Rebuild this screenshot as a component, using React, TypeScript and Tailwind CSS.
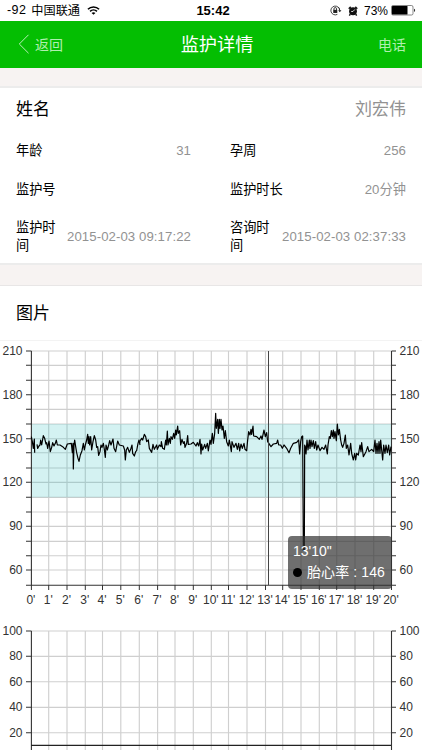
import React from 'react';

type Trace = {
  x: number;
  points: string;
};

const GRID_X = [48.7, 67, 85.3, 102.5, 120.8, 139.3, 157.6, 175, 193.3, 211.3, 228.5, 247, 265.5, 282.7, 301, 319.3, 336.7, 355, 373.7];
const FHR_Y = [10, 24.3, 39.3, 53.7, 68.3, 83, 97.7, 111.7, 127, 141.3, 156.3, 171, 185.3, 200.3, 214.7, 229];
const TOCO_Y = [11, 36.3, 61.7, 87.3, 112.7];

// heart rate, three stretches of the recording (units are thirds of a pixel)
const TRACES: Trace[] = [
  {
    x: 0,
    points:
      'M94 140L97 155L100 175L103 147L104 188M111 163L113 175L117 168L120 165L122 150L125 165L130 137L134 145L138 162L140 158L143 175L147 153L151 185L155 172L158 158L162 168L166 160L169 150L172 165L180 165L188 170L196 178L202 162L214 160L217 188L219 160L220 237L222 165L224 150L227 170L230 188L234 205L237 214L241 195L246 182L250 160L253 180L256 165L260 150L263 133L265 160L267 140L269 165L272 140L275 180L279 155L283 137L287 150L290 172L293 170L296 196L300 185L303 165L306 172L310 160L313 178L316 202L318 165L322 180L326 165L329 152L333 165L339 147L342 175L347 185L353 153L358 165L370 168L374 180L376 210L379 180L383 172L388 187L392 178L396 165L398 190L403 198L407 185L410 182L414 160L417 150L420 165',
  },
  {
    x: 130,
    points:
      'M29 160L30 153L35 145L38 150L43 133L47 140L50 155L55 150L58 175L65 187L69 163L73 178L80 165L82 178L88 165L93 170L94 155L98 175L103 178L107 150L109 165L112 123L114 165L118 145L121 160L123 140L127 148L131 130L134 145L137 120L139 135L143 108L145 130L149 122L152 165L156 148L160 160L163 155L165 172L170 160L173 137L175 163L183 162L190 157L198 168L202 158L206 168L210 148L213 192L215 162L218 180L224 163L227 175L232 160L235 183L240 150L243 163L247 130L250 160L254 130L257 70L259 115L263 88L265 130L268 88L270 115L273 88L276 120L279 108L283 145L286 122L290 155L295 168L298 150L304 185L306 155L312 172L318 160L322 178L326 160L329 183L333 162L337 175L342 160L345 178L350 182L353 150L356 125L360 135L363 118L365 133L369 108L371 138L380 140L388 148L393 138L396 148L402 120L406 140L410 128L413 155L420 165',
  },
  {
    x: 260,
    points:
      'M27 162L33 170L40 162L50 160L53 150L56 165L62 165L67 175L72 165L80 175L87 188L92 175L100 160L108 158L112 155L116 150L119 192L122 155L125 140L128 138L130 482L133 482L134 165L136 170L138 192L141 150L144 180L148 150L150 175L153 150L156 170L160 152L163 175L167 155L170 180L174 165L180 182L186 172L192 178L197 165L202 192L204 165L208 140L211 145L214 122L217 140L220 120L222 145L225 125L229 152L232 102L235 135L238 118L242 150L245 165L248 172L252 160L256 135L259 175L263 165L267 195L272 160L275 190L280 210L284 190L287 210L290 190L295 195L300 165L303 185L305 158L310 200L318 185L323 170L327 185L335 178L341 185L345 150L348 190L351 160L354 190L357 155L360 190L362 150L365 180L368 210L371 165L375 190L378 165L382 188L386 165L389 195L393 170',
  },
];

function Grid({ rows, bottom }: { rows: number[]; bottom: number }) {
  return (
    <g stroke="#cfcfcf" strokeWidth="1.15">
      {GRID_X.map((x) => (
        <line key={x} x1={x} x2={x} y1={rows[0]} y2={bottom} />
      ))}
      {rows.map((y) => (
        <line key={y} x1="31" x2="391" y1={y} y2={y} />
      ))}
    </g>
  );
}

function Axes({ rows, bottom }: { rows: number[]; bottom: number }) {
  return (
    <g stroke="#333" strokeWidth="1.1">
      <line x1="31.4" x2="31.4" y1={rows[0]} y2={bottom} />
      <line x1="391.5" x2="391.5" y1={rows[0]} y2={bottom} />
      {rows.map((y) => (
        <path key={y} d={`M26 ${y}H31.4M391.5 ${y}H396`} />
      ))}
    </g>
  );
}

function YLabels({ values, ys }: { values: number[]; ys: number[] }) {
  return (
    <g fontSize="12" fill="#333">
      {values.map((v, i) => (
        <g key={v}>
          <text x="22.5" y={ys[i] + 4} textAnchor="end">{v}</text>
          <text x="399.5" y={ys[i] + 4}>{v}</text>
        </g>
      ))}
    </g>
  );
}

function HeartRateChart() {
  const ticks = [31.4, ...GRID_X, 391.5];
  return (
    <div className="relative h-[279px]">
      <svg className="block" width="422" height="279" viewBox="0 0 422 279">
        <Grid rows={FHR_Y} bottom={244.3} />
        <rect x="31.5" y="83" width="360" height="73.3" fill="#26c0c0" fillOpacity="0.2" />
        <Axes rows={[...FHR_Y, 244.3]} bottom={244.3} />
        <line x1="31" x2="392" y1="244.3" y2="244.3" stroke="#333" strokeWidth="1.1" />
        {TRACES.map((t) => (
          <path
            key={t.x}
            d={t.points}
            transform={`translate(${t.x} 49) scale(0.33333)`}
            fill="none"
            stroke="#000"
            strokeWidth="3.6"
            strokeLinejoin="round"
          />
        ))}
        <line x1="268.5" x2="268.5" y1="10" y2="244" stroke="#444" />
        <YLabels values={[210, 180, 150, 120, 90, 60]} ys={[10, 53.7, 97.7, 141.3, 185.3, 229]} />
        <g fontSize="12" fill="#333" textAnchor="middle">
          {ticks.map((x, i) => (
            <g key={i}>
              <line x1={x} x2={x} y1="244" y2="249" stroke="#333" />
              <text x={x - 0.5} y="262.5">{`${i}'`}</text>
            </g>
          ))}
        </g>
      </svg>

      {/* Tooltip */}
      <div className="absolute left-[288px] top-[195px] h-[53px] w-[104px] rounded bg-[#323232]/70 pl-[5px] pt-[5px] text-[14px] leading-[21px] text-white">
        <div>13'10"</div>
        <div className="flex items-center whitespace-nowrap">
          <span className="mr-[5px] h-[9px] w-[9px] rounded-full bg-black" />
          <span className="tracking-[0.1px]">胎心率 : 146</span>
        </div>
      </div>
    </div>
  );
}

function ContractionChart() {
  return (
    <svg className="block" width="422" height="130" viewBox="0 0 422 130">
      <Grid rows={TOCO_Y} bottom={130} />
      <Axes rows={TOCO_Y} bottom={130} />
      <line x1="31" x2="391" y1="125.3" y2="125.3" stroke="#222" strokeWidth="1.2" />
      <YLabels values={[100, 80, 60, 40, 20]} ys={TOCO_Y} />
    </svg>
  );
}

function Field({ label, value }: { label: string; value: string }) {
  return (
    <div className="flex items-center justify-between">
      <span className="leading-[18px]">{label}</span>
      <span className="shrink-0 pl-2 tracking-[0.08px] text-[#929292]">{value}</span>
    </div>
  );
}

function StatusBar() {
  return (
    <div className="flex h-[21px] items-center bg-white pl-[7px] pr-[6px] text-black">
      <div className="flex flex-1 items-center">
        <span className="mr-[5px] text-[12.5px] tracking-[0.4px]">-92</span>
        <span className="pt-px text-[12.2px]">中国联通</span>
        <svg className="ml-[7px]" width="13" height="11" viewBox="0 0 14 11" fill="none" stroke="#000" strokeWidth="1.7">
          <path d="M1 4.2C4.3.8 9.7.8 13 4.2M3.3 6.5C5.4 4.4 8.6 4.4 10.7 6.5" />
          <path d="M7 10.2L4.9 8.1C6.1 7 7.9 7 9.1 8.1Z" fill="#000" stroke="none" />
        </svg>
      </div>
      <span className="pl-[3px] text-[13px] font-bold">15:42</span>
      <div className="flex flex-1 items-center justify-end">
        <svg width="12" height="11" viewBox="0 0 13 12" fill="none" stroke="#222">
          <path d="M10.5 6A4.8 4.8 0 1 0 8 10.2M9.2 2.4A4.8 4.8 0 0 1 10.5 6" strokeWidth="0.9" />
          <path d="M8.8 5.6h3.6L10.6 7.8Z" fill="#222" stroke="none" />
          <path d="M4.3 5.5V4.2a1.4 1.4 0 0 1 2.8 0v1.3" />
          <rect x="3.5" y="5.3" width="4.4" height="3.4" fill="#222" stroke="none" />
        </svg>
        <svg className="ml-[6px]" width="10" height="10" viewBox="0 0 11 11">
          <circle cx="5.5" cy="5.8" r="4.3" fill="#111" />
          <path d="M.8 3L3 1M10.2 3L8 1M2.5 9L1.5 10.5M8.5 9L9.5 10.5" stroke="#111" strokeWidth="1.6" />
          <path d="M5.5 6L7.5 3.8M5.5 6H3.5" stroke="#fff" strokeWidth="0.9" />
        </svg>
        <span className="ml-[6px] text-[12px]">73%</span>
        <svg className="ml-[3px]" width="25" height="11" viewBox="0 0 25 11">
          <rect x="0.5" y="0.5" width="21.5" height="9.5" rx="1.5" fill="#fff" stroke="#555" strokeWidth="0.7" />
          <rect x="1" y="1" width="15.5" height="8.5" rx="0.5" fill="#000" />
          <path d="M23 3.7C24.5 4 24.5 6.5 23 6.9Z" fill="#333" />
        </svg>
      </div>
    </div>
  );
}

export default function App() {
  return (
    <div className="h-[750px] w-[422px] overflow-hidden bg-[#f7f3f2] font-['Liberation_Sans','Noto_Sans_CJK_SC',sans-serif] text-black">
      <StatusBar />

      <header className="flex h-[46.5px] items-center bg-[#04be02] pl-[18px] pr-4 text-white">
        <div className="flex flex-1 items-center">
          <svg width="12" height="20" viewBox="0 0 12 20" fill="none" stroke="#b9f0b8" strokeWidth="1">
            <path d="M10.5 .8L1.3 10L10.5 19.2" />
          </svg>
          <span className="ml-[5px] mt-[3px] text-[14px] text-[#b0efaf]">返回</span>
        </div>
        <h1 className="pl-[10px] pt-px text-[18.2px] leading-none">监护详情</h1>
        <div className="mt-[3px] flex-1 text-right text-[14px] text-[#b0efaf]">电话</div>
      </header>

      <section className="mt-[18px] h-[179px] border-y-2 border-y-[#ececec] bg-white px-4 pt-px">
        <div className="flex h-[43px] items-center justify-between text-[17px]">
          <span>姓名</span>
          <span className="text-[#929292]">刘宏伟</span>
        </div>
        <div className="grid grid-cols-[175px_176px] grid-rows-[39px_39px_54px] gap-x-[39px] text-[13.2px]">
          <Field label="年龄" value="31" />
          <Field label="孕周" value="256" />
          <Field label="监护号" value="" />
          <Field label="监护时长" value="20分钟" />
          <Field label="监护时间" value="2015-02-03 09:17:22" />
          <Field label="咨询时间" value="2015-02-03 02:37:33" />
        </div>
      </section>

      <section className="mt-[20.5px] border-t border-t-[#e8e6e6] bg-white">
        <h2 className="flex h-[55px] items-center border-b border-b-[#f3f3f3] px-4 pt-px text-[17px]">图片</h2>
        <HeartRateChart />
        <ContractionChart />
      </section>
    </div>
  );
}
